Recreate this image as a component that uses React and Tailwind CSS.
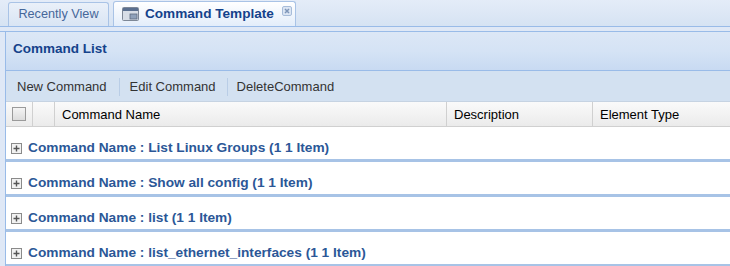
import React from "react";

const groups = [
  "List Linux Groups",
  "Show all config",
  "list",
  "list_ethernet_interfaces",
];

function TabIcon() {
  return (
    <svg width="17" height="15" viewBox="0 0 17 15">
      <rect x="0.5" y="0.5" width="16" height="13" rx="1" fill="#d7dde6" stroke="#7d8796" />
      <rect x="1" y="1" width="15" height="3" fill="#5a6f8f" />
      <rect x="8" y="7" width="7" height="5" fill="#8fa1ba" stroke="#5d6b80" strokeWidth="0.8" />
    </svg>
  );
}

function CloseIcon() {
  return (
    <svg width="10" height="10" viewBox="0 0 10 10">
      <rect x="0.5" y="0.5" width="9" height="9" rx="1.5" fill="#dbe5f3" stroke="#a7bcd9" />
      <path d="M3 3 L7 7 M7 3 L3 7" stroke="#7e95b8" strokeWidth="1.5" />
    </svg>
  );
}

function PlusBox() {
  return (
    <svg width="11" height="11" viewBox="0 0 11 11">
      <rect x="0.5" y="0.5" width="10" height="10" fill="#f2f2f2" stroke="#8a8a8a" />
      <path d="M2.5 5.5 H8.5 M5.5 2.5 V8.5" stroke="#555" strokeWidth="1.4" />
    </svg>
  );
}

function App() {
  return (
    <div className="w-[730px] h-[266px] overflow-hidden bg-[#dfe8f6] font-['Liberation_Sans',Arial,sans-serif]">
      {/* tab strip */}
      <div className="h-[27px] flex items-end gap-[4px] pl-[8px] bg-gradient-to-b from-[#e4ecf8] to-[#d6e3f3] border-b border-[#99bbe8]">
        <div className="h-[24px] w-[101px] flex items-center justify-center rounded-t-[3px] border border-b-0 border-[#a9c3e6] bg-gradient-to-b from-[#eaf0f9] to-[#d9e5f4] text-[12.7px] text-[#46679a] whitespace-nowrap">
          Recently View
        </div>
        <div className="h-[25px] w-[183px] flex items-center pl-[8px] rounded-t-[3px] border border-b-0 border-[#a9c3e6] bg-gradient-to-b from-[#ffffff] to-[#e3edfa] whitespace-nowrap">
          <TabIcon />
          <span className="ml-[6px] text-[13.6px] font-bold text-[#15428b]">Command Template</span>
          <span className="ml-[8px] -mt-[6px]">
            <CloseIcon />
          </span>
        </div>
      </div>
      <div className="h-[5px] bg-[#dfe8f6] border-b border-[#99bbe8]"></div>

      {/* panel */}
      <div className="ml-[5px] border-l border-[#99bbe8] bg-white">
        <div className="h-[39px] flex items-center pl-[7px] pb-[4px] bg-gradient-to-b from-[#dce7f6] via-[#d5e3f5] to-[#c8daf2] border-b border-[#99bbe8] text-[13.5px] font-bold text-[#15428b]">
          Command List
        </div>
        <div className="h-[31px] flex items-center pl-[11px] pt-[2px] bg-[#d3e1f1] border-b border-[#c6d3e2] text-[13px] text-[#333]">
          <span>New Command</span>
          <span className="ml-[12px] mr-[10px] h-[18px] border-l border-[#b9cde6]"></span>
          <span>Edit Command</span>
          <span className="ml-[11px] mr-[9px] h-[18px] border-l border-[#b9cde6]"></span>
          <span>DeleteCommand</span>
        </div>
        <div className="h-[25px] flex bg-gradient-to-b from-[#fafafa] to-[#ebebeb] border-b border-[#d0d0d0] text-[13px] text-black">
          <div className="w-[27px] flex items-center justify-center border-r border-[#d0d0d0]">
            <div className="w-[14px] h-[14px] border border-[#9a9a9a] bg-gradient-to-b from-[#f4f4f4] to-[#dcdcdc]"></div>
          </div>
          <div className="w-[22px] border-r border-[#d0d0d0]"></div>
          <div className="w-[392px] flex items-center pl-[7px] pt-[2px] border-r border-[#d0d0d0]">Command Name</div>
          <div className="w-[146px] flex items-center pl-[7px] pt-[2px] border-r border-[#d0d0d0]">Description</div>
          <div className="flex-1 flex items-center pl-[7px] pt-[2px]">Element Type</div>
        </div>
        {groups.map((g) => (
          <div key={g} className="h-[35px] flex items-center gap-[6px] pl-[5px] pt-[11px] border-b-[3px] border-[#a7c3e6] text-[13.7px] font-bold text-[#2b5797] whitespace-nowrap">
            <PlusBox />
            <span>Command Name : {g} (1 1 Item)</span>
          </div>
        ))}
      </div>
    </div>
  );
}

export default App;
